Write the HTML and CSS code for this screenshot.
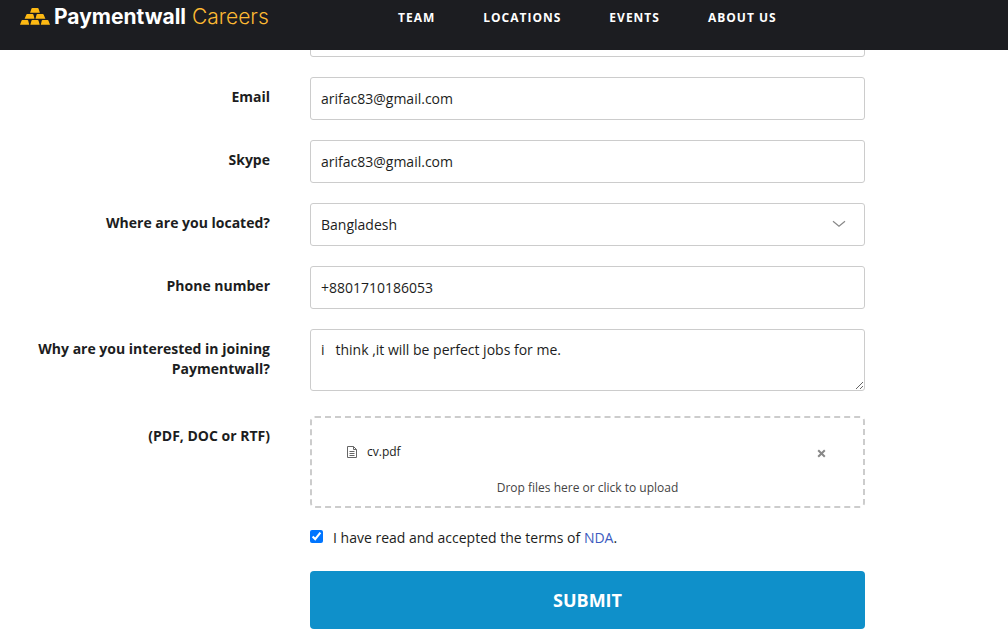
FILE: index.html
```html
<!DOCTYPE html>
<html lang="en">
<head>
<meta charset="utf-8">
<meta name="viewport" content="width=device-width, initial-scale=1">
<title>Paymentwall Careers</title>
<link rel="stylesheet" href="styles.css">
</head>
<body>
<header class="header">
  <a class="logo" href="#">
    <svg class="logo-mark" viewBox="0 0 30 17" aria-hidden="true">
      <path d="M12.3 0h5.4q.6 0 .8.6l1.4 4.1h-9.8l1.4-4.1q.2-.6.8-.6z"/>
      <path d="M7.2 6h5.4q.6 0 .8.6l1.1 4.1H4.6L6.4 6.6q.2-.6.8-.6z"/>
      <path d="M17.4 6h5.4q.6 0 .8.6l1.8 4.1h-9.9l1.1-4.1q.2-.6.8-.6z"/>
      <path d="M2.4 12h5q.7 0 .8.6l1 4.1H0l1.6-4.1q.2-.6.8-.6z"/>
      <path d="M12.3 12h5.4q.6 0 .8.6l1.2 4.1h-9.4l1.2-4.1q.2-.6.8-.6z"/>
      <path d="M22.6 12h5q.6 0 .8.6l1.6 4.1h-9.2l1-4.1q.1-.6.8-.6z"/>
    </svg>
    <span class="logo-text"><strong class="logo-name">Paymentwall</strong> <span class="logo-area">Careers</span></span>
  </a>
  <nav class="nav">
    <a class="nav-link" href="#">TEAM</a>
    <a class="nav-link" href="#">LOCATIONS</a>
    <a class="nav-link" href="#">EVENTS</a>
    <a class="nav-link" href="#">ABOUT US</a>
  </nav>
</header>
<main>
  <form class="form">
    <div class="row">
      <input class="control control-only" type="text" aria-label="Name">
    </div>
    <div class="row">
      <label class="label" for="email">Email</label>
      <input class="control" id="email" type="email" value="arifac83@gmail.com">
    </div>
    <div class="row">
      <label class="label" for="skype">Skype</label>
      <input class="control" id="skype" type="text" value="arifac83@gmail.com">
    </div>
    <div class="row">
      <label class="label" for="country">Where are you located?</label>
      <div class="select-wrap">
        <select class="control select" id="country"><option>Bangladesh</option></select>
        <svg class="chevron" viewBox="0 0 14 8" aria-hidden="true"><path d="M1 1.2l6 5 6-5"/></svg>
      </div>
    </div>
    <div class="row">
      <label class="label" for="phone">Phone number</label>
      <input class="control" id="phone" type="tel" value="+8801710186053">
    </div>
    <div class="row">
      <label class="label" for="why">Why are you interested in joining Paymentwall?</label>
      <textarea class="control textarea" id="why">i   think ,it will be perfect jobs for me.</textarea>
    </div>
    <div class="row row-upload">
      <span class="label" id="files-label">(PDF, DOC or RTF)</span>
      <div class="dropzone" role="group" aria-labelledby="files-label">
        <div class="file">
          <svg class="file-icon" viewBox="0 0 10 12" aria-hidden="true">
            <path d="M.5.5h6l3 3v8h-9z"/><path d="M6.5.5v3h3"/><path d="M2.5 5.5h5M2.5 7.5h5M2.5 9.5h5"/>
          </svg>
          <span class="file-name">cv.pdf</span>
          <button class="remove" type="button" aria-label="Remove cv.pdf">
            <svg class="remove-icon" viewBox="0 0 9 9" aria-hidden="true"><path d="M1.2 1.2l6.6 6.6M7.8 1.2L1.2 7.8"/></svg>
          </button>
        </div>
        <button class="upload" type="button">Drop files here or click to upload</button>
      </div>
    </div>
    <div class="row row-terms">
      <div class="terms">
        <input class="check" id="terms" type="checkbox" checked>
        <span><label for="terms">I have read and accepted the terms of</label> <a class="link" href="#">NDA</a>.</span>
      </div>
    </div>
    <div class="row">
      <button class="submit" type="submit">SUBMIT</button>
    </div>
  </form>
</main>
</body>
</html>
```
FILE: styles.css
```css
* {
  box-sizing: border-box;
}

body {
  margin: 0;
  background: #fff;
  color: #1c1d21;
  font: 14px/20px "Open Sans", "Noto Sans", sans-serif;
}

.header {
  position: fixed;
  z-index: 1;
  top: 0;
  left: 0;
  right: 0;
  height: 50px;
  padding: 0 20px;
  display: flex;
  align-items: flex-start;
  background: #1c1d21;
}

.logo {
  display: flex;
  flex: none;
  gap: 4px;
  width: 378px;
  padding-top: 4px;
  color: #fff;
  text-decoration: none;
}

.logo-mark {
  width: 30px;
  height: 17px;
  margin-top: 4px;
  fill: #fdb913;
}

.logo-text {
  font: 21px/26px Inter, "Open Sans", sans-serif;
  white-space: nowrap;
}

.logo-name {
  font-weight: 700;
}

.logo-area {
  color: #fdb933;
  font-weight: 300;
}

.nav {
  display: flex;
  gap: 48px;
  padding-top: 8px;
}

.nav-link {
  color: #fff;
  font-size: 12px;
  font-weight: 700;
  letter-spacing: 1px;
  text-decoration: none;
  white-space: nowrap;
}

.form {
  display: grid;
  gap: 20px;
  padding-top: 14px;
}

.row {
  display: grid;
  grid-template-columns: 240px minmax(0, 555px);
  column-gap: 40px;
  align-items: start;
  padding: 0 30px;
}

.label {
  padding-top: 10px;
  font-weight: 700;
  text-align: right;
}

.control {
  display: block;
  width: 100%;
  height: 43px;
  margin: 0;
  padding: 0 10px;
  border: 1px solid #ccc;
  border-radius: 3px;
  background: #fff;
  color: #1c1d21;
  font: inherit;
}

.control-only,
.terms,
.submit {
  grid-column: 2;
}

.select-wrap {
  position: relative;
}

.select {
  appearance: none;
}

.chevron {
  position: absolute;
  top: 17px;
  right: 19px;
  width: 14px;
  height: 8px;
  fill: none;
  stroke: #888;
  stroke-width: 1.2;
  pointer-events: none;
}

.textarea {
  height: 62px;
  padding: 10px;
  resize: vertical;
}

.row-upload {
  padding-top: 5px;
}

.dropzone {
  height: 92px;
  padding: 24px 35px 0;
  border: 2px dashed #ccc;
  border-radius: 5px;
  font-size: 12px;
}

.file {
  display: flex;
  align-items: center;
  gap: 10px;
}

.file-icon {
  width: 10px;
  height: 12px;
  fill: none;
  stroke: #666;
}

.remove {
  display: flex;
  margin-left: auto;
  padding: 3px 2px 0;
  border: 0;
  background: none;
}

.remove-icon {
  width: 9px;
  height: 9px;
  stroke: #888;
  stroke-width: 2;
}

.upload {
  display: block;
  width: 100%;
  margin-top: 16px;
  padding: 0;
  border: 0;
  background: none;
  color: #444;
  font: inherit;
}

.terms {
  display: flex;
  align-items: center;
  gap: 10px;
}

.check {
  width: 13px;
  height: 13px;
  margin: 0 0 3px;
}

.link {
  color: #3c5bc0;
  text-decoration: none;
}

.row-terms {
  padding-bottom: 3px;
}

.submit {
  height: 58px;
  border: 0;
  border-radius: 4px;
  background: #0f90ca;
  color: #fff;
  font: 700 18px/24px "Open Sans", "Noto Sans", sans-serif;
}
```
